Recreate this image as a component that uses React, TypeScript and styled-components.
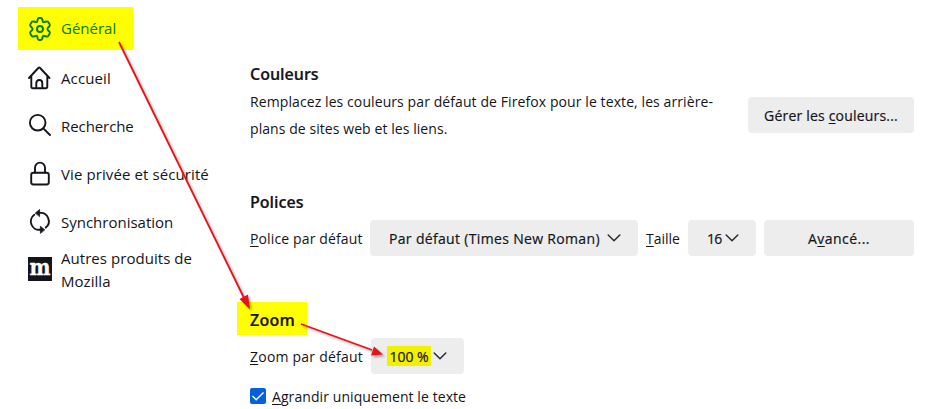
import React from "react";
import styled, { createGlobalStyle } from "styled-components";

const GlobalStyle = createGlobalStyle`
  * { box-sizing: border-box; }
  body { margin: 0; background: #fff; color: #15141a; font-family: "Open Sans", "Noto Sans", sans-serif; }
  h2, p { margin: 0; }
`;

const Page = styled.div`
  position: relative;
  display: grid;
  grid-template-columns: 250px 664px;
  width: 942px;
  height: 409px;
  overflow: hidden;
`;

const Sidebar = styled.nav`
  display: flex;
  flex-direction: column;
  padding: 5px 0 0 18px;
`;

const NavItem = styled.a<{ $active?: boolean }>`
  display: flex;
  align-items: center;
  gap: 9px;
  width: ${(p) => (p.$active ? "115px" : "200px")};
  height: ${(p) => (p.$active ? "43px" : "48px")};
  margin: ${(p) => (p.$active ? "2px 0 4px" : "0")};
  padding-left: 10px;
  color: ${(p) => (p.$active ? "#067a08" : "#15141a")};
  background: ${(p) => (p.$active ? "#ffff00" : "transparent")};
`;

const NavIcon = styled.svg<{ $lift?: number }>`
  flex: none;
  width: 24px;
  height: 24px;
  margin-bottom: ${(p) => p.$lift ?? 0}px;
  overflow: visible;
  fill: none;
  stroke: currentColor;
  stroke-width: 1.9;
  stroke-linecap: round;
  stroke-linejoin: round;
`;

const LogoLetter = styled.text`
  fill: #fff;
  stroke: #fff;
  stroke-width: 0.4;
  font: bold 22px "DejaVu Serif", serif;
`;

const Label = styled.span<{ $spacing?: number; $size?: number }>`
  font-size: ${(p) => p.$size ?? 15}px;
  line-height: 23px;
  letter-spacing: ${(p) => p.$spacing ?? 0}px;
  white-space: nowrap;
  u { text-decoration-thickness: 1px; text-underline-offset: 2px; }
`;

const Content = styled.main`
  display: flex;
  flex-direction: column;
  padding-top: 62px;
`;

const Heading = styled.h2<{ $spacing?: number }>`
  height: 24px;
  font-size: 16px;
  font-weight: 600;
  line-height: 24px;
  letter-spacing: ${(p) => p.$spacing ?? 0}px;
  -webkit-text-stroke: 0.2px #15141a;
`;

const ColorRow = styled.div`
  display: flex;
  justify-content: space-between;
  height: 104px;
  padding-top: 2px;
`;

const Description = styled.p`
  display: flex;
  flex-direction: column;
  span { line-height: 27px; }
`;

const Button = styled.button<{ $width: number; $top?: number }>`
  width: ${(p) => p.$width}px;
  height: 36px;
  margin: ${(p) => p.$top ?? 0}px 0 0;
  padding: 0;
  border: 0;
  border-radius: 4px;
  background: #ededee;
  color: #15141a;
  font-family: inherit;
  -webkit-text-stroke: 0.2px #15141a;
`;

const Select = styled(Button)`
  display: flex;
  align-items: center;
  justify-content: space-between;
  padding: 0 17px 0 19px;
`;

const Chevron = styled.svg`
  flex: none;
  width: 14px;
  height: 8px;
  fill: none;
  stroke: #2b2a33;
  stroke-width: 1.5;
  stroke-linecap: round;
  stroke-linejoin: round;
`;

const FieldRow = styled.div<{ $top: number }>`
  display: flex;
  align-items: center;
  height: 36px;
  margin-top: ${(p) => p.$top}px;
`;

const FieldLabel = styled.label<{ $width: number }>`
  width: ${(p) => p.$width}px;
  display: flex;
`;

const Gap = styled.span`
  width: 8px;
`;

const ZoomTitle = styled.div`
  width: 70px;
  height: 33px;
  margin: 46px 0 0 -13px;
  padding: 6px 0 0 13px;
  background: #ffff00;
`;

const Mark = styled.span`
  flex: none;
  width: 44px;
  height: 20px;
  margin-left: -3px;
  display: flex;
  align-items: center;
  justify-content: center;
  background: #f0f000;
`;

const CheckRow = styled.label`
  display: flex;
  align-items: center;
  gap: 6px;
  height: 24px;
  margin-top: 10px;
`;

const CheckBox = styled.svg`
  width: 16px;
  height: 16px;
  fill: none;
`;

const Arrows = styled.svg`
  position: absolute;
  inset: 0;
  pointer-events: none;
  filter: drop-shadow(2px 2px 1px rgba(0, 0, 0, 0.3));
`;

const Down = () => (
  <Chevron viewBox="0 0 14 8"><path d="M1.2 1 7 6.8 12.8 1" /></Chevron>
);

export default function App() {
  return (
    <Page>
      <GlobalStyle />
      <Sidebar>
        <NavItem $active>
          <NavIcon viewBox="0 0 24 24">
            <path d="M9.600 2.700Q9.900 1 11.300 1H12.700Q14.100 1 14.400 2.700L14.700 4.300Q15 5.400 16 5.200L18.300 4.500Q19.700 4.100 20.400 5.300L21.600 7.300Q22.300 8.600 21.300 9.500L19.900 10.800Q18.800 12 19.900 13.200L21.300 14.500Q22.300 15.400 21.600 16.700L20.400 18.700Q19.700 19.900 18.300 19.500L16 18.800Q15 18.600 14.700 19.700L14.400 21.300Q14.100 23 12.700 23H11.300Q9.900 23 9.600 21.300L9.300 19.700Q9 18.600 8 18.800L5.700 19.500Q4.300 19.900 3.600 18.700L2.400 16.700Q1.700 15.400 2.700 14.500L4.100 13.200Q5.200 12 4.100 10.800L2.700 9.500Q1.700 8.600 2.400 7.300L3.600 5.300Q4.300 4.100 5.700 4.500L8 5.200Q9 5.400 9.300 4.300Z" />
            <circle cx="12" cy="12" r="3" />
          </NavIcon>
          <Label>Général</Label>
        </NavItem>
        <NavItem>
          <NavIcon viewBox="0 0 24 24">
            <path d="M1 12 10.300 2Q11.200 1.100 12.100 2L21.500 12M3.300 10V20.500Q3.300 22.300 5.100 22.300H17.500Q19.300 22.300 19.300 20.500V10M8.300 22V17.200Q8.300 14 11.300 14T14.300 17.200V22" />
          </NavIcon>
          <Label $spacing={0.12}>Accueil</Label>
        </NavItem>
        <NavItem>
          <NavIcon viewBox="0 0 24 24">
            <circle cx="9.700" cy="8.700" r="7.800" /><path d="M15.300 14.300 22 21" />
          </NavIcon>
          <Label $spacing={-0.08}>Recherche</Label>
        </NavItem>
        <NavItem>
          <NavIcon viewBox="0 0 24 24">
            <rect x="3.200" y="10.800" width="17.600" height="11.700" rx="2.200" /><path d="M7 10.500V5.800A5 5.200 0 0 1 17 5.800V10.500" />
          </NavIcon>
          <Label $spacing={0.1}>Vie privée et sécurité</Label>
        </NavItem>
        <NavItem>
          <NavIcon viewBox="0 0 24 24">
            <path d="M6.300 4.700A8.100 8.300 0 0 0 12 19.700M12 2.900A8.100 8.300 0 0 1 17.800 17.600" />
            <path d="M7.500 2.900 11.600-.5V6.300ZM16.500 19.700 12.400 16.300V23Z" fill="currentColor" strokeWidth="0.800" />
          </NavIcon>
          <Label>Synchronisation</Label>
        </NavItem>
        <NavItem>
          <NavIcon viewBox="0 0 24 24" $lift={2}>
            <path d="M0 0H24V24H0Z" fill="#15141a" stroke="none" />
            <LogoLetter x="1.500" y="18" textLength="21" lengthAdjust="spacingAndGlyphs">m</LogoLetter>
          </NavIcon>
          <Label $spacing={0.05}>Autres produits de<br />Mozilla</Label>
        </NavItem>
      </Sidebar>

      <Content>
        <Heading>Couleurs</Heading>
        <ColorRow>
          <Description>
            <Label $size={14} $spacing={0.09}>Remplacez les couleurs par défaut de Firefox pour le texte, les arrière-</Label>
            <Label $size={14} $spacing={0.07}>plans de sites web et les liens.</Label>
          </Description>
          <Button $width={166} $top={9}><Label $size={14} $spacing={0.19}>Gérer les <u>c</u>ouleurs...</Label></Button>
        </ColorRow>

        <Heading>Polices</Heading>
        <FieldRow $top={6}>
          <FieldLabel $width={120}><Label $size={14} $spacing={0.13}><u>P</u>olice par défaut</Label></FieldLabel>
          <Select $width={268}><Label $size={14} $spacing={0.33}>Par défaut (Times New Roman)</Label><Down /></Select>
          <Gap />
          <FieldLabel $width={42}><Label $size={14}><u>T</u>aille</Label></FieldLabel>
          <Select $width={68}><Label $size={14} $spacing={-0.7}>16</Label><Down /></Select>
          <Gap />
          <Button $width={150}><Label $size={14} $spacing={0.45}>A<u>v</u>ancé...</Label></Button>
        </FieldRow>

        <ZoomTitle><Heading $spacing={0.25}>Zoom</Heading></ZoomTitle>
        <FieldRow $top={3}>
          <FieldLabel $width={121}><Label $size={14} $spacing={0.22}><u>Z</u>oom par défaut</Label></FieldLabel>
          <Select $width={93}><Mark><Label $size={14}>100 %</Label></Mark><Down /></Select>
        </FieldRow>
        <CheckRow>
          <CheckBox viewBox="0 0 16 16">
            <rect width="16" height="16" rx="2" fill="#0560e0" />
            <path d="M2.500 8 6.200 11.700 13.500 4.500" stroke="#fff" strokeWidth="1.500" />
          </CheckBox>
          <Label $size={14} $spacing={0.08}><u>A</u>grandir uniquement le texte</Label>
        </CheckRow>
      </Content>

      <Arrows width="942" height="409" viewBox="0 0 942 409">
        <path d="M119 42 245 300M301 324 372 350" stroke="#e5141c" strokeWidth="1.800" fill="none" />
        <path d="M250 309.500 239.500 299 248 294.500ZM383 354.500 371 355.500 374 346.500Z" fill="#e5141c" />
      </Arrows>
    </Page>
  );
}
